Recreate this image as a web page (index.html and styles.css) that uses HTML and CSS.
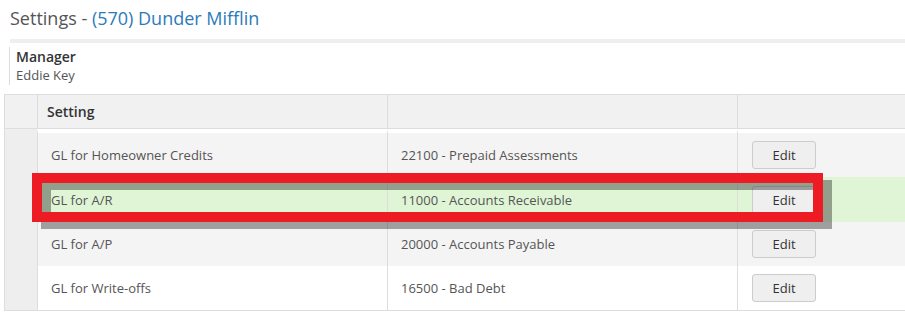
FILE: index.html
```html
<!DOCTYPE html>
<html>
	<head>
		<meta charset="UTF-8">
		<title>Settings</title>
		<link rel="stylesheet" href="styles.css">
	</head>
	<body>
		<h1 class="page-title">Settings - <a href="#">(570) Dunder Mifflin</a></h1>
		<div class="title-rule"></div>
		<div class="manager">
			<div class="manager-label">Manager</div>
			<div class="manager-name">Eddie Key</div>
		</div>
		<div class="table-wrap">
			<table class="settings">
				<colgroup>
					<col class="c-gutter">
					<col class="c-name">
					<col class="c-value">
					<col class="c-action">
				</colgroup>
				<thead>
					<tr>
						<th class="gutter"></th>
						<th>Setting</th>
						<th></th>
						<th></th>
					</tr>
				</thead>
				<tbody>
					<tr class="first">
						<td class="gutter"></td>
						<td>GL for Homeowner Credits</td>
						<td>22100 - Prepaid Assessments</td>
						<td><input type="button" class="btn" value="Edit" /></td>
					</tr>
					<tr class="picked">
						<td class="gutter"></td>
						<td>GL for A/R</td>
						<td>11000 - Accounts Receivable</td>
						<td><input type="button" class="btn" value="Edit" /></td>
					</tr>
					<tr class="odd">
						<td class="gutter"></td>
						<td>GL for A/P</td>
						<td>20000 - Accounts Payable</td>
						<td><input type="button" class="btn" value="Edit" /></td>
					</tr>
					<tr>
						<td class="gutter"></td>
						<td>GL for Write-offs</td>
						<td>16500 - Bad Debt</td>
						<td><input type="button" class="btn" value="Edit" /></td>
					</tr>
				</tbody>
			</table>
		</div>
		<!-- annotation frame drawn over the A/R row -->
		<div class="callout"></div>
	</body>
</html>
```

FILE: styles.css
```css
* {
	margin: 0;
	padding: 0;
	box-sizing: border-box;
}

body {
	position: relative;
	overflow: hidden;
	background-color: #fff;
	font-family: "Open Sans", "Liberation Sans", sans-serif;
	color: #555;
}

.page-title {
	padding: 6px 0 0 10px;
	font-size: 18px;
	line-height: 24px;
	font-weight: 400;
	color: #555;
}
.page-title a {
	color: #2b7bb9;
	text-decoration: none;
}

.title-rule {
	height: 4px;
	margin: 9px 0 0 10px;
	background-color: #eee;
}

.manager {
	margin: 4px 0 0 9px;
	padding-left: 6px;
	border-left: 1px solid #ddd;
}
.manager-label {
	font-size: 14px;
	line-height: 19px;
	font-weight: 600;
	color: #333;
}
.manager-name {
	font-size: 13px;
	line-height: 19px;
	color: #555;
}

.table-wrap {
	margin: 9px 0 0 4px;
	overflow: hidden;
}

.settings {
	width: 1083px;
	table-layout: fixed;
	border-collapse: separate;
	border-spacing: 0;
	border-top: 1px solid #ddd;
	border-bottom: 1px solid #ddd;
	font-size: 13px;
}
.c-gutter { width: 33px; }
.c-name { width: 350px; }
.c-value { width: 350px; }
.c-action { width: 350px; }

.settings th,
.settings td {
	border-left: 1px solid #ddd;
	text-align: left;
	vertical-align: middle;
	white-space: nowrap;
}

.settings th {
	height: 34px;
	padding: 0 9px;
	background-color: #f1f1f1;
	border-bottom: 1px solid #ddd;
	font-size: 14px;
	font-weight: 600;
	color: #333;
}

.settings td {
	height: 44px;
	padding: 0 13px;
	background-color: #fff;
}
.settings tr.first td {
	height: 48px;
	border-top: 4px solid #fff;
	background-color: #f4f4f4;
}
.settings tr.picked td {
	height: 45px;
	background-color: #dff5d6;
}
.settings tr.odd td {
	background-color: #f4f4f4;
}
.settings td.gutter,
.settings tr td.gutter {
	padding: 0;
	border-top: 0;
	background-color: #eee;
}
.settings tr.first td.gutter {
	border-top: 0;
}

.btn {
	width: 64px;
	height: 28px;
	margin-left: 1px;
	border: 1px solid #ccc;
	border-radius: 3px;
	background-color: #efefef;
	font-family: "Open Sans", "Liberation Sans", sans-serif;
	font-size: 13px;
	color: #333;
	cursor: pointer;
	outline: none;
}

.callout {
	position: absolute;
	left: 32px;
	top: 173px;
	width: 791px;
	height: 49px;
	border: 10px solid #ed1c24;
	filter: drop-shadow(9px 7px 0 rgba(0, 0, 0, 0.35));
}
```
